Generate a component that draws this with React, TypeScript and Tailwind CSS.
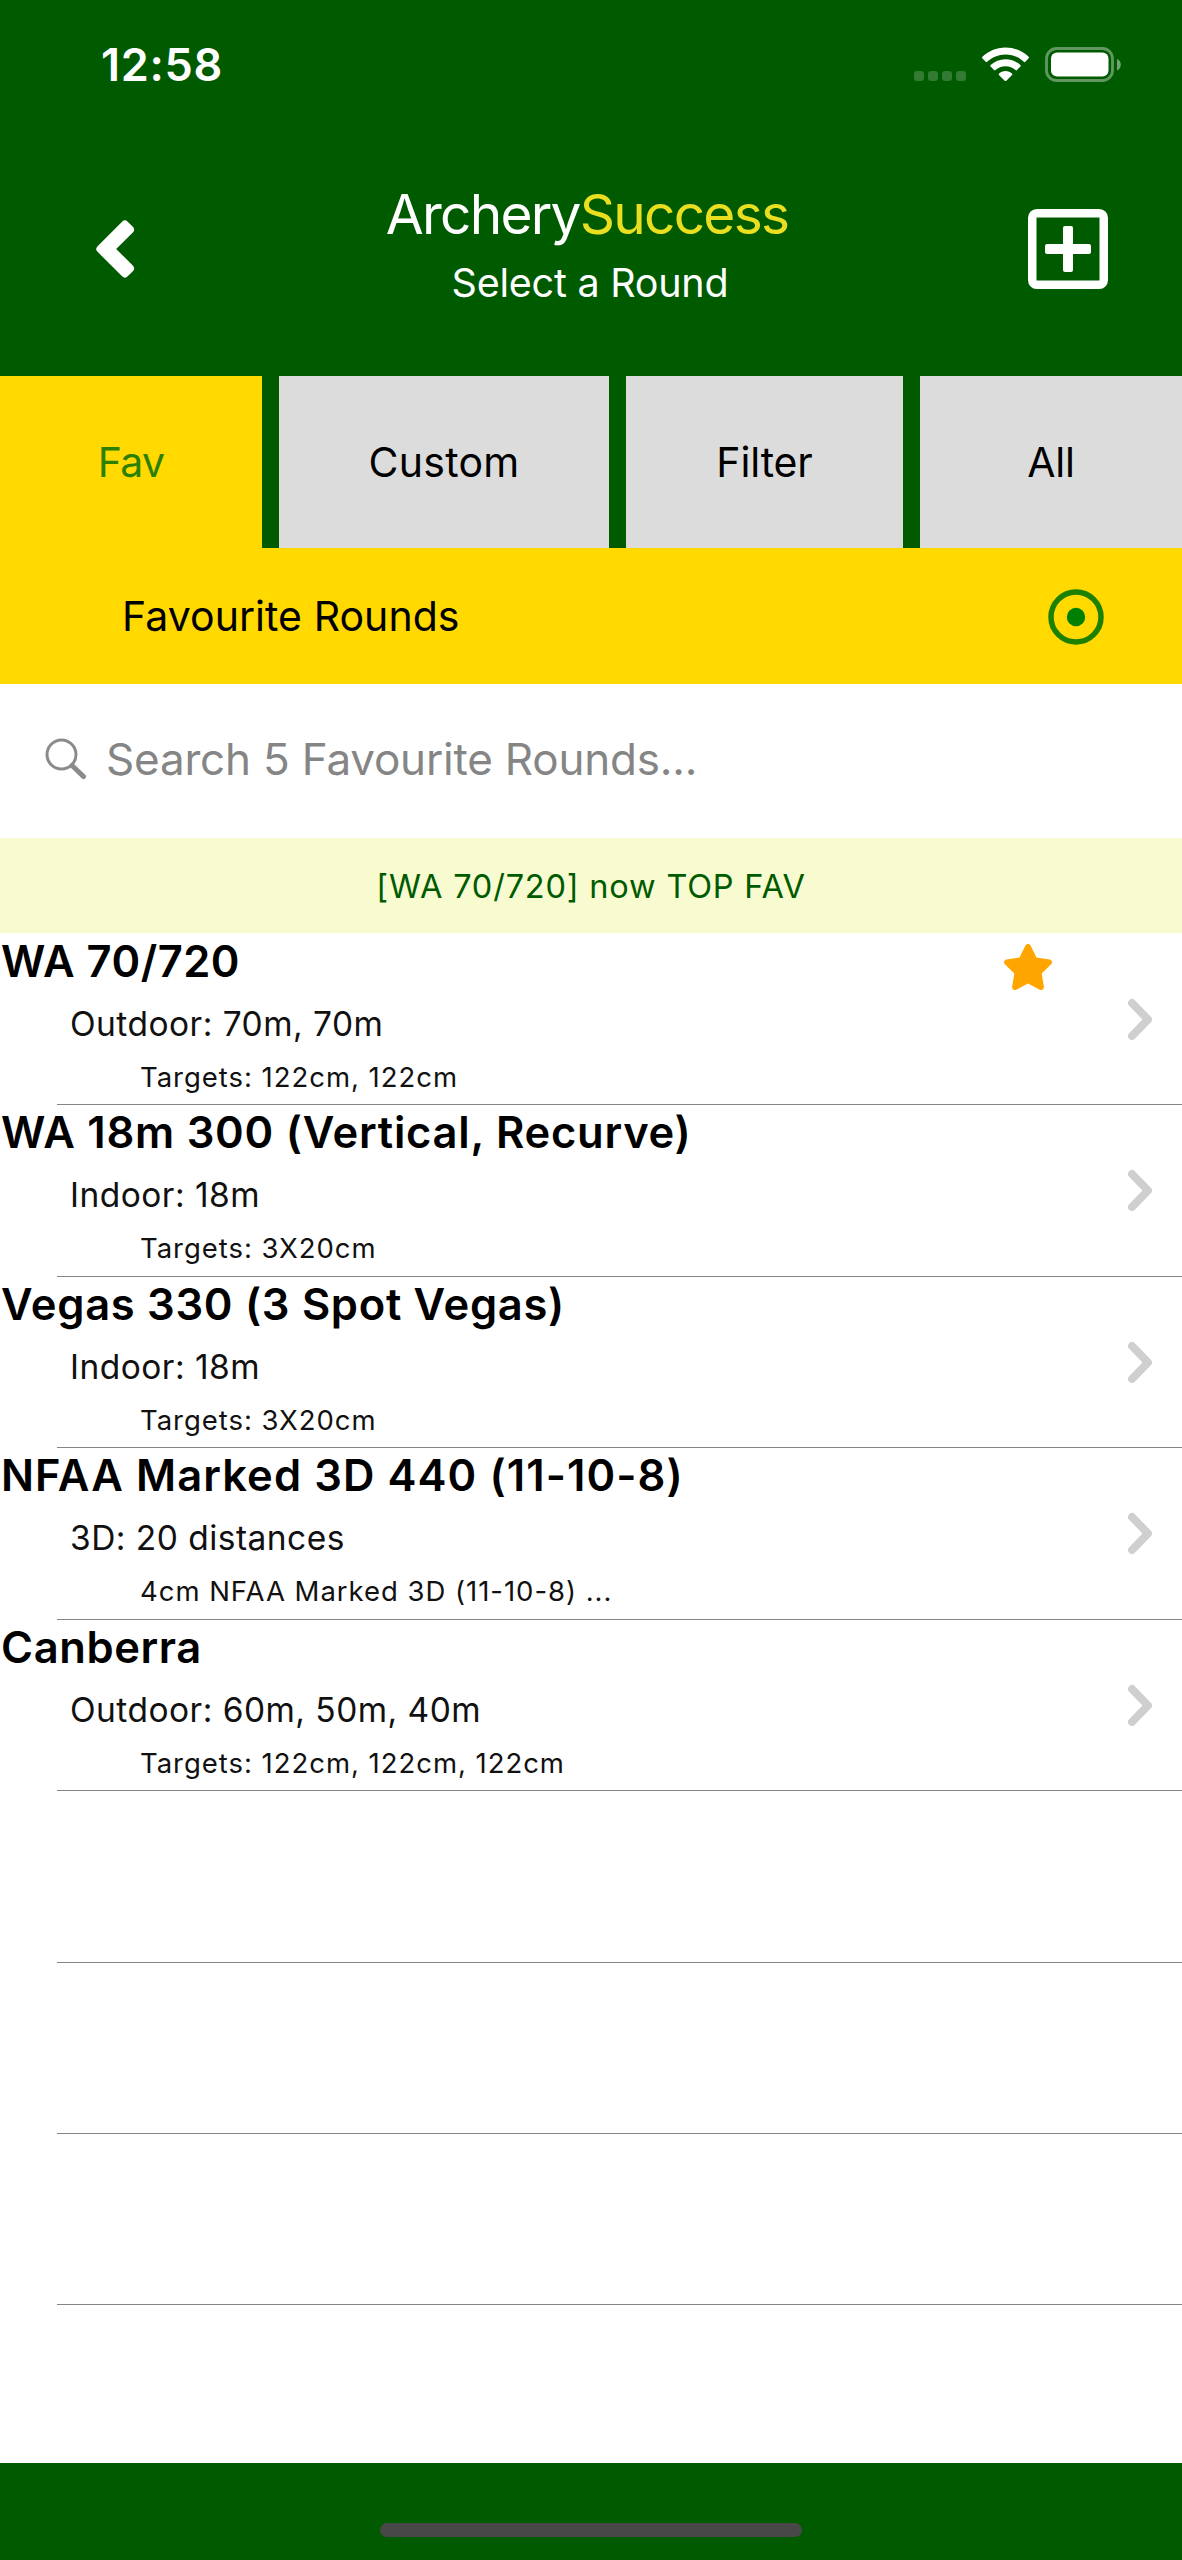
import { useState } from "react";
import { FaStar } from "react-icons/fa";

type Round = {
  name: string;
  tracking: string;
  distances: string;
  targets: string;
  starred?: boolean;
};

const TABS = [
  { label: "Fav", width: "w-[262px]", tracking: "tracking-[-0.8px]" },
  { label: "Custom", width: "w-[330px]", tracking: "tracking-[0.3px]" },
  { label: "Filter", width: "w-[277px]", tracking: "tracking-[-0.1px]" },
  { label: "All", width: "w-[262px]", tracking: "tracking-[-0.2px]" },
];

const ROUNDS: Round[] = [
  {
    name: "WA 70/720",
    tracking: "tracking-[0.5px]",
    distances: "Outdoor: 70m, 70m",
    targets: "Targets: 122cm, 122cm",
    starred: true,
  },
  {
    name: "WA 18m 300 (Vertical, Recurve)",
    tracking: "tracking-[0.75px]",
    distances: "Indoor: 18m",
    targets: "Targets: 3X20cm",
  },
  {
    name: "Vegas 330 (3 Spot Vegas)",
    tracking: "tracking-[0.7px]",
    distances: "Indoor: 18m",
    targets: "Targets: 3X20cm",
  },
  {
    name: "NFAA Marked 3D 440 (11-10-8)",
    tracking: "tracking-[1.08px]",
    distances: "3D: 20 distances",
    targets: "4cm NFAA Marked 3D (11-10-8) ...",
  },
  {
    name: "Canberra",
    tracking: "tracking-[0.6px]",
    distances: "Outdoor: 60m, 50m, 40m",
    targets: "Targets: 122cm, 122cm, 122cm",
  },
];

const EMPTY_ROWS = [0, 1, 2];

function StatusBar() {
  return (
    <div className="flex h-[121px] items-center pt-2 pr-[61px] pl-[101px] text-white">
      <span className="flex-1 text-[45px] leading-none font-semibold tracking-[0.7px]">12:58</span>
      <div className="mt-[23px] mr-[16px] flex gap-1">
        <span className="h-[10px] w-[10px] rounded-[3px] bg-white/20" />
        <span className="h-[10px] w-[10px] rounded-[3px] bg-white/20" />
        <span className="h-[10px] w-[10px] rounded-[3px] bg-white/20" />
        <span className="h-[10px] w-[10px] rounded-[3px] bg-white/20" />
      </div>
      <svg className="mr-4" width="47" height="35" viewBox="0 0 47 35" fill="currentColor" aria-hidden="true">
        <path d="M23.5 0.4C32.6 0.4 40.8 4 46.6 9.8c.5.5.5 1 .1 1.5l-3.4 3.5c-.5.5-1 .5-1.5 0C37 10.2 30.5 7.4 23.5 7.4S10 10.2 5.2 14.8c-.5.5-1 .5-1.5 0L.3 11.3c-.4-.5-.4-1 .1-1.5C6.2 4 14.4.4 23.5.4z" />
        <path d="M23.5 12.2c5.8 0 11 2.2 14.9 5.9.5.5.5 1 0 1.5L35 23c-.5.5-1 .5-1.5.1-2.6-2.4-6.1-3.8-10-3.8s-7.4 1.4-10 3.8c-.5.4-1 .4-1.5-.1l-3.4-3.4c-.5-.5-.5-1 0-1.5 3.9-3.7 9.1-5.9 14.9-5.9z" />
        <path d="M23.5 24c2.5 0 4.8.9 6.5 2.4.5.5.5 1 .1 1.5l-5.8 5.8c-.5.5-1.1.5-1.6 0l-5.8-5.8c-.4-.5-.4-1 .1-1.5 1.7-1.5 4-2.4 6.5-2.4z" />
      </svg>
      <svg width="76" height="35" viewBox="0 0 76 35" aria-hidden="true">
        <rect x="1.5" y="1.5" width="66" height="32" rx="10" fill="none" stroke="#fff" strokeOpacity="0.38" strokeWidth="2.8" />
        <rect x="6" y="5.5" width="57.5" height="24" rx="6" fill="#fff" />
        <path d="M72 12c2.6 1.2 3.8 3.2 3.8 5.7S74.6 22.2 72 23.4z" fill="#fff" fillOpacity="0.45" />
      </svg>
    </div>
  );
}

function BackIcon() {
  return (
    <svg width="40" height="60" viewBox="0 0 40 60" aria-hidden="true">
      <path
        d="M5.4 30L29.9 5.5L35 10.6L15.6 30L35 49.4L29.9 54.5Z"
        fill="#fff"
        stroke="#fff"
        strokeWidth="8"
        strokeLinejoin="round"
      />
    </svg>
  );
}

function AddIcon() {
  return (
    <svg width="80" height="80" viewBox="0 0 80 80" fill="none" aria-hidden="true">
      <rect x="4.25" y="4.25" width="71.5" height="71.5" rx="4.5" stroke="#fff" strokeWidth="8.5" />
      <rect x="17" y="35" width="46" height="10" rx="2" fill="#fff" />
      <rect x="35" y="17" width="10" height="46" rx="2" fill="#fff" />
    </svg>
  );
}

function Header() {
  return (
    <header className="flex h-[255px] items-center justify-between pr-[74px] pl-[95px]">
      <button className="w-[89px]" aria-label="Back">
        <BackIcon />
      </button>
      <div className="text-center whitespace-nowrap text-white">
        <h1 className="text-[55px] leading-[69px] tracking-[-1.75px]">
          Archery<span className="text-[#e9de20]">Success</span>
        </h1>
        <p className="pl-[6px] text-[39.5px] leading-[69px] tracking-[-0.25px]">Select a Round</p>
      </div>
      <button className="flex w-[118px] justify-end" aria-label="Add round">
        <AddIcon />
      </button>
    </header>
  );
}

function RoundRow({ round }: { round: Round }) {
  return (
    <li className="relative flex h-[171.43px] items-start justify-between">
      <div className="whitespace-nowrap">
        <h2 className={`h-[59px] pl-px text-[43.5px] leading-[57px] font-semibold ${round.tracking}`}>{round.name}</h2>
        <p className="h-[64px] pl-[70px] text-[33.5px] leading-[64px] tracking-[0.47px] text-[#111]">{round.distances}</p>
        <p className="h-[42px] pl-[140px] text-[27.5px] leading-[42px] tracking-[0.97px] text-[#111]">{round.targets}</p>
      </div>
      <div className="flex h-full">
        {round.starred && <FaStar className="mt-[11px] mr-[73px] h-[46px] w-[52px] text-[#ffa500]" />}
        <svg className="mt-[65px] mr-[28px]" width="27" height="43" viewBox="0 0 27 43" fill="none" aria-hidden="true">
          <path d="M5 5L21 21.5L5 38" stroke="#cfcfcf" strokeWidth="8" strokeLinecap="round" strokeLinejoin="round" />
        </svg>
      </div>
      <span className="absolute right-0 -bottom-px left-[57px] h-px bg-[#858585]" />
    </li>
  );
}

export default function App() {
  const [tab, setTab] = useState("Fav");

  return (
    <div className="flex h-[2560px] w-[1182px] flex-col overflow-hidden bg-[#005a00] font-['Inter',sans-serif] text-black">
      <StatusBar />
      <Header />

      <nav className="flex h-[172px] justify-between">
        {TABS.map((t) => (
          <button
            key={t.label}
            onClick={() => setTab(t.label)}
            className={`pt-[2px] text-[41px] ${t.width} ${t.tracking} ${
              tab === t.label ? "bg-[#ffd900] text-[#2b8000]" : "bg-[#dcdcdc]"
            }`}
          >
            {t.label}
          </button>
        ))}
      </nav>

      <div className="flex h-[136px] items-center justify-between bg-[#ffd900] pt-[2px] pr-[78px] pl-[122px]">
        <span className="text-[41px] tracking-[0.05px]">Favourite Rounds</span>
        <svg width="56" height="56" viewBox="0 0 56 56" aria-hidden="true">
          <circle cx="28" cy="28" r="25" fill="none" stroke="#1c8000" strokeWidth="5.5" />
          <circle cx="28" cy="28" r="9.2" fill="#008000" />
        </svg>
      </div>

      <label className="flex h-[154px] items-center bg-white pb-[5px] pl-[44px]">
        <svg width="43" height="43" viewBox="0 0 43 43" fill="none" stroke="#8b8b8b" aria-hidden="true">
          <circle cx="17.5" cy="17.5" r="14.5" strokeWidth="3" />
          <path d="M28 28.5L39.5 39.5" strokeWidth="5" strokeLinecap="round" />
        </svg>
        <input
          className="ml-[19px] flex-1 text-[44px] tracking-[-0.2px] outline-none placeholder:text-[#858585]"
          placeholder="Search 5 Favourite Rounds..."
        />
      </label>

      <p className="h-[95px] bg-[#f8fad0] text-center text-[32.5px] leading-[97px] tracking-[0.8px] text-[#005a00]">
        [WA 70/720] now TOP FAV
      </p>

      <main className="flex-1 bg-white">
        <ul>
          {ROUNDS.map((round) => (
            <RoundRow key={round.name} round={round} />
          ))}
          {EMPTY_ROWS.map((n) => (
            <li key={n} className="relative h-[171.43px]">
              <span className="absolute right-0 -bottom-px left-[57px] h-px bg-[#858585]" />
            </li>
          ))}
        </ul>
      </main>

      <footer className="flex h-[97px] justify-center pt-[60px]">
        <span className="h-[14px] w-[422px] rounded-full bg-[#484848]" />
      </footer>
    </div>
  );
}
